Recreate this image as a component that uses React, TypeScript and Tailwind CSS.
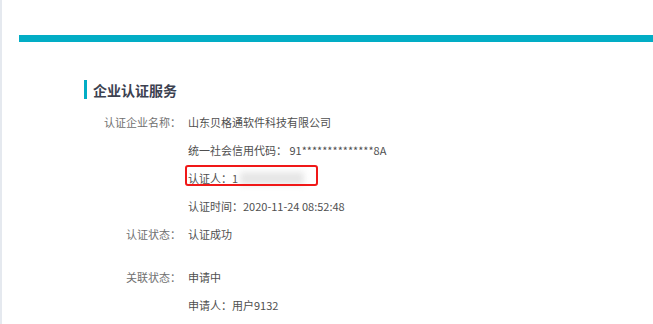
const font = { fontFamily: '"Noto Sans CJK SC", "Noto Sans", sans-serif' };

const Row = ({ children }: { children: React.ReactNode }) => (
  <div className="flex h-[28px] items-center whitespace-nowrap">{children}</div>
);

const Label = ({ text }: { text: string }) => (
  <div className="flex h-[28px] w-[169px] shrink-0 items-center justify-end pr-[7px] text-[#707070]">{text}</div>
);

export default function App() {
  return (
    <div className="flex h-[324px] w-full overflow-hidden bg-white" style={font}>
      <div className="w-[2px] shrink-0 bg-[#e5e9ef]" />
      <div className="flex-1 pl-[17px] pt-[35px]">
        <div className="h-[7px] bg-[#02adc5]" />

        <div className="ml-[65px] mt-[38px] flex h-[19px] items-center">
          <div className="h-[19px] w-[3px] bg-[#02adc5]" />
          <h2 className="ml-[6px] text-[14px] font-bold leading-none text-[#3c4150]">企业认证服务</h2>
        </div>

        <div className="mt-[9px] text-[11px] text-[#4f4f4f]">
          <div className="flex">
            <Label text="认证企业名称：" />
            <div>
              <Row>山东贝格通软件科技有限公司</Row>
              <Row>统一社会信用代码： 91**************8A</Row>
              <div className="relative">
                <Row>
                  认证人：1
                  <span className="ml-[2px] inline-block h-[13px] w-[64px] bg-[#e6e6e6] blur-[3px]" />
                </Row>
                <div className="absolute left-[-3px] top-[1px] h-[21px] w-[133px] rounded-[3px] border-2 border-[#f01818]" />
              </div>
              <Row>认证时间：2020-11-24 08:52:48</Row>
            </div>
          </div>

          <div className="flex">
            <Label text="认证状态：" />
            <Row>认证成功</Row>
          </div>

          <div className="mt-[15px] flex">
            <Label text="关联状态：" />
            <div>
              <Row>申请中</Row>
              <Row>申请人：用户9132</Row>
            </div>
          </div>
        </div>
      </div>
    </div>
  );
}
